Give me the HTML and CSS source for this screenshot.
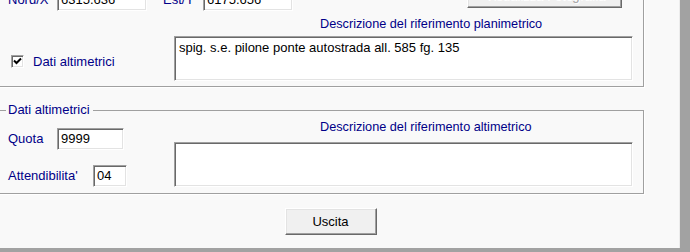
FILE: index.html
```html
<!DOCTYPE html>
<html lang="it">
<head>
<meta charset="utf-8">
<title>Punto di riferimento</title>
<link rel="stylesheet" href="styles.css">
</head>
<body>
<div class="window">
  <fieldset class="group group-plan">
    <div class="coords">
      <span class="lbl lbl-nord">Nord/X</span>
      <div class="edit edit-coord">6315.636</div>
      <span class="lbl lbl-est">Est/Y</span>
      <div class="edit edit-coord">6175.656</div>
      <div class="btn btn-photo">Visualizza Fotografia</div>
    </div>
    <div class="cols cols-plan">
      <div class="left">
        <div class="check-row">
          <span class="checkbox">
            <svg width="9" height="9" viewBox="0 0 9 9"><path d="M1 3.5 L3.5 6 L8 1.5" fill="none" stroke="#000" stroke-width="2"/></svg>
          </span>
          <span class="lbl">Dati altimetrici</span>
        </div>
      </div>
      <div class="right">
        <div class="caption">Descrizione del riferimento planimetrico</div>
        <div class="memo memo-plan">spig. s.e. pilone ponte autostrada all. 585 fg. 135</div>
      </div>
    </div>
  </fieldset>

  <fieldset class="group group-alt">
    <legend class="lbl legend">Dati altimetrici</legend>
    <div class="cols">
      <div class="left">
        <div class="field-row row-quota">
          <span class="lbl lbl-quota">Quota</span>
          <div class="edit edit-quota">9999</div>
        </div>
        <div class="field-row row-att">
          <span class="lbl lbl-att">Attendibilita'</span>
          <div class="edit edit-att">04</div>
        </div>
      </div>
      <div class="right">
        <div class="caption caption-alt">Descrizione del riferimento altimetrico</div>
        <div class="memo memo-alt"></div>
      </div>
    </div>
  </fieldset>

  <div class="footer">
    <div class="btn btn-exit">Uscita</div>
  </div>
</div>
</body>
</html>
```

FILE: styles.css
```css
html, body {
  margin: 0;
  padding: 0;
}
body {
  background: #a2a2a2;
  width: 690px;
  height: 252px;
  overflow: hidden;
  font-family: "Liberation Sans", Arial, sans-serif;
  font-size: 13px;
}
.window {
  box-sizing: border-box;
  width: 698px;
  margin: -20px 0 0 -18px;
  padding: 0 0 13px 16px;
  background: #f9f9f9;
  border-right: 1px solid #ececec;
}
.group {
  box-sizing: border-box;
  width: 646px;
  margin: 0;
  padding: 0 10px 5px 9px;
  border: 1px solid #a0a0a0;
  box-shadow: 1px 1px 0 #ffffff;
  min-width: 0;
}
.group-plan {
  padding-top: 4px;
}
.group-alt {
  margin-top: 12px;
  padding-bottom: 6px;
}
.legend {
  margin-left: -2px;
  padding: 0 3px 0 2px;
  line-height: 15px;
}
.lbl {
  color: #000088;
  line-height: 22px;
  white-space: nowrap;
}
.coords {
  display: flex;
  align-items: flex-start;
}
.coords .lbl {
  margin-top: 4px;
}
.lbl-nord { width: 49px; }
.lbl-est { width: 40px; margin-left: 16px; }
.edit {
  box-sizing: border-box;
  height: 22px;
  background: #ffffff;
  border-top: 1px solid #a0a0a0;
  border-left: 1px solid #a0a0a0;
  border-right: 1px solid #ffffff;
  border-bottom: 1px solid #ffffff;
  box-shadow: inset 1px 1px 0 #696969, inset -1px -1px 0 #e3e3e3;
  padding: 1px 2px 0 3px;
  line-height: 18px;
  color: #000;
  white-space: nowrap;
}
.edit-coord {
  width: 90px;
  margin-top: 4px;
}
.btn {
  box-sizing: border-box;
  background: #f0f0f0;
  border-top: 1px solid #ffffff;
  border-left: 1px solid #ffffff;
  border-right: 1px solid #696969;
  border-bottom: 1px solid #696969;
  box-shadow: inset -1px -1px 0 #a0a0a0, inset 1px 1px 0 #e3e3e3;
  text-align: center;
  white-space: nowrap;
}
.btn-photo {
  width: 155px;
  height: 23px;
  margin-left: auto;
  margin-right: 11px;
  line-height: 20px;
  color: #a0a0a0;
  text-shadow: 1px 1px 0 #ffffff;
}
.cols {
  display: grid;
  grid-template-columns: 166px 459px;
}
.check-row {
  display: flex;
  align-items: center;
  margin-top: 44px;
  margin-left: 3px;
  height: 13px;
}
.check-row .lbl {
  margin-left: 9px;
  line-height: 13px;
}
.checkbox {
  box-sizing: border-box;
  width: 13px;
  height: 13px;
  background: #ffffff;
  border-top: 1px solid #a0a0a0;
  border-left: 1px solid #a0a0a0;
  border-right: 1px solid #ffffff;
  border-bottom: 1px solid #ffffff;
  box-shadow: inset 1px 1px 0 #696969, inset -1px -1px 0 #e3e3e3;
  display: flex;
  align-items: center;
  justify-content: center;
}
.checkbox svg {
  display: block;
}
.caption {
  color: #000088;
  font-size: 12.7px;
  line-height: 12px;
  padding-left: 146px;
  margin-top: 7px;
  white-space: nowrap;
}
.caption-alt {
  margin-top: 0;
}
.memo {
  box-sizing: border-box;
  height: 45px;
  background: #ffffff;
  border-top: 1px solid #a0a0a0;
  border-left: 1px solid #a0a0a0;
  border-right: 1px solid #ffffff;
  border-bottom: 1px solid #ffffff;
  box-shadow: inset 1px 1px 0 #696969, inset -1px -1px 0 #e3e3e3;
  padding: 3px 3px 0 4px;
  line-height: 15px;
  color: #000;
}
.memo-plan { margin-top: 6px; }
.memo-alt { margin-top: 9px; }
.field-row {
  display: flex;
  align-items: center;
}
.row-quota { margin-top: 7px; }
.row-att { margin-top: 15px; }
.lbl-quota { width: 49px; }
.lbl-att { width: 85px; }
.edit-quota { width: 67px; }
.edit-att { width: 34px; }
.footer {
  display: flex;
  justify-content: center;
  padding-top: 14px;
  padding-right: 16px;
}
.btn-exit {
  width: 92px;
  height: 27px;
  line-height: 25px;
  color: #000;
}
```
